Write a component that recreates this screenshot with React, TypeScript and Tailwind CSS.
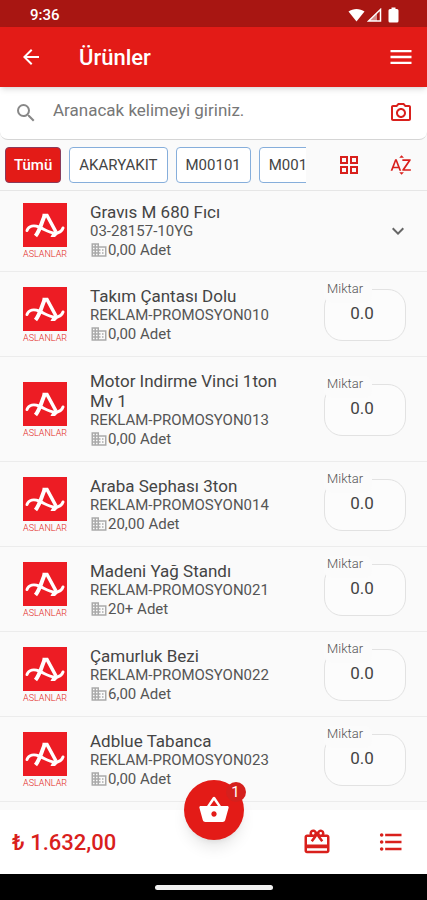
import { ReactElement } from 'react'
import {
  MdArrowBack,
  MdBusiness,
  MdCardGiftcard,
  MdExpandMore,
  MdFormatListBulleted,
  MdMenu,
  MdOutlineGridView,
  MdOutlinePhotoCamera,
  MdSearch,
  MdShoppingBasket,
  MdSortByAlpha,
} from 'react-icons/md'

interface Product {
  name: string
  code: string
  stock: string
  expandable?: boolean
}

const categories = ['AKARYAKIT', 'M00101', 'M001']

const products: Product[] = [
  { name: 'Gravıs M 680 Fıcı', code: '03-28157-10YG', stock: '0,00 Adet', expandable: true },
  { name: 'Takım Çantası Dolu', code: 'REKLAM-PROMOSYON010', stock: '0,00 Adet' },
  { name: 'Motor Indirme Vinci 1ton Mv 1', code: 'REKLAM-PROMOSYON013', stock: '0,00 Adet' },
  { name: 'Araba Sephası 3ton', code: 'REKLAM-PROMOSYON014', stock: '20,00 Adet' },
  { name: 'Madeni Yağ Standı', code: 'REKLAM-PROMOSYON021', stock: '20+ Adet' },
  { name: 'Çamurluk Bezi', code: 'REKLAM-PROMOSYON022', stock: '6,00 Adet' },
  { name: 'Adblue Tabanca', code: 'REKLAM-PROMOSYON023', stock: '0,00 Adet' },
]

function StatusBar(): ReactElement {
  return (
    <div className="flex h-[27px] items-center justify-between bg-[#a81612] pt-0.5 pr-7 pl-[30px] text-white">
      <span className="text-[15px] leading-5 font-medium">9:36</span>
      <div className="flex items-center gap-0.5">
        <svg width="17" height="14" viewBox="0 0 17 14" fill="currentColor">
          <path d="M8.5 13.5L.5 3.5C5 0 12 0 16.5 3.5Z" />
        </svg>
        <svg width="15" height="14" viewBox="0 0 15 14" fill="none" stroke="currentColor">
          <path d="M13.5 1.5V13H1.5Z" strokeWidth="1.5" />
          <path d="M10 5V13H2Z" fill="currentColor" fillOpacity="0.5" stroke="none" />
        </svg>
        <svg className="ml-1" width="11" height="16" viewBox="0 0 11 16" fill="currentColor">
          <path d="M3.5 .5h4V2H9a1.5 1.5 0 0 1 1.5 1.5V14A1.5 1.5 0 0 1 9 15.5H2A1.5 1.5 0 0 1 .5 14V3.5A1.5 1.5 0 0 1 2 2h1.5z" />
        </svg>
      </div>
    </div>
  )
}

function BrandLogo(): ReactElement {
  return (
    <div className="flex w-11 shrink-0 flex-col items-center">
      <svg className="size-11 bg-[#ed1c24]" viewBox="0 0 44 44" fill="none" stroke="#fff">
        <path d="M4 27.5C6 22.5 11 22 16 24C22 26.500 26 30 32 30C36.500 30 39 28 40 25" strokeWidth="3" strokeLinecap="round" />
        <path d="M12.5 33C17 27.5 18 21 21.5 13" strokeWidth="4" />
        <path d="M19.5 12.500H24L33 29" strokeWidth="3.5" />
        <path d="M27.500 34H32L37 29H30Z" fill="#fff" strokeWidth="0" />
      </svg>
      <span className="mt-[3px] text-[9px] leading-[9px] font-light text-[#e31e24]">ASLANLAR</span>
    </div>
  )
}

function QuantityField({ id }: { id: string }): ReactElement {
  return (
    <div className="relative w-[82px] shrink-0">
      <input
        id={id}
        type="text"
        inputMode="decimal"
        defaultValue="0.0"
        className="block h-[52px] w-full rounded-[18px] border border-[#e2e2e2] bg-[#fcfcfc] pr-1.5 pb-1 text-center text-[17px] text-[#444]"
      />
      <label
        htmlFor={id}
        className="absolute -top-2 left-0 h-[22px] w-12 rounded-lg bg-[#fbfbfb] pl-[3px] text-[13px] leading-4 font-light text-[#555]"
      >
        Miktar
      </label>
    </div>
  )
}

function ProductRow({ product }: { product: Product }): ReactElement {
  const { name, code, stock, expandable } = product
  return (
    <li
      className={`flex items-center border-b border-[#ececec] pr-[21px] pl-[23px] ${expandable ? 'pt-[11px] pb-3' : 'pt-[14px] pb-[13px]'}`}
    >
      <BrandLogo />
      <div className="ml-[23px] min-w-0 flex-1 pr-6">
        <h2 className="text-[17px] leading-5 text-[#444]">{name}</h2>
        <p className="text-[15px] leading-[19px] text-[#555]">{code}</p>
        <p className="flex items-center text-[15px] leading-[18px] text-[#555]">
          <MdBusiness className="size-[18px] text-[#aaa]" />
          {stock}
        </p>
      </div>
      {expandable ? (
        <button type="button" aria-label="Genişlet" className="-mr-1 text-[#666]">
          <MdExpandMore className="size-6" />
        </button>
      ) : (
        <QuantityField id={code} />
      )}
    </li>
  )
}

export default function App(): ReactElement {
  return (
    <div className="flex min-h-screen flex-col bg-[#fafafa] font-[Roboto,sans-serif]">
      <StatusBar />
      <header className="z-10 flex h-[60px] items-center bg-[#e31b17] pr-3 pl-[19px] text-white shadow-md">
        <button type="button" aria-label="Geri">
          <MdArrowBack className="size-6" />
        </button>
        <h1 className="ml-9 flex-1 text-[22px] font-medium">Ürünler</h1>
        <button type="button" aria-label="Menü">
          <MdMenu className="size-7" />
        </button>
      </header>

      <div className="flex h-[53px] items-center rounded-b-lg border-b border-[#d5d5d5] bg-white px-3.5">
        <MdSearch className="size-6 text-[#888]" />
        <input
          type="search"
          aria-label="Ara"
          placeholder="Aranacak kelimeyi giriniz."
          className="ml-[15px] min-w-0 flex-1 pb-1 text-[17px] outline-none placeholder:text-[#777]"
        />
        <button type="button" aria-label="Kamera" className="text-[#d9201c]">
          <MdOutlinePhotoCamera className="size-6" />
        </button>
      </div>

      <div className="flex h-[51px] items-center border-b border-[#e6e6e6] pl-[5px]">
        <div className="flex min-w-0 flex-1 gap-2 overflow-hidden text-[15px]">
          <button
            type="button"
            className="h-9 shrink-0 rounded-[4px] border border-[#8a3a5a] bg-[#e31b17] px-2 font-medium text-white"
          >
            Tümü
          </button>
          {categories.map((category) => (
            <button
              key={category}
              type="button"
              className="h-9 shrink-0 rounded-[4px] border border-[#86aedb] bg-white px-[9px] text-[#444]"
            >
              {category}
            </button>
          ))}
        </div>
        <div className="flex w-[121px] shrink-0 items-center justify-between pr-3.5 pl-[31px] text-[#d9201c]">
          <button type="button" aria-label="Izgara görünümü">
            <MdOutlineGridView className="size-6" />
          </button>
          <button type="button" aria-label="Sırala">
            <MdSortByAlpha className="size-6" />
          </button>
        </div>
      </div>

      <ul className="flex-1">
        {products.map((product) => (
          <ProductRow key={product.code} product={product} />
        ))}
      </ul>

      <footer className="relative mt-2 flex h-16 items-center bg-white pr-[22px] pl-3 text-[#d9201c]">
        <p className="flex-1 text-[22px] font-medium">₺ 1.632,00</p>
        <button type="button" aria-label="Kampanyalar">
          <MdCardGiftcard className="size-[30px]" />
        </button>
        <button type="button" aria-label="Liste" className="ml-[45px]">
          <MdFormatListBulleted className="size-7" />
        </button>
        <button
          type="button"
          aria-label="Sepet"
          className="absolute -top-[30px] left-1/2 flex size-[60px] -translate-x-1/2 items-center justify-center rounded-full bg-[#e31b17] text-white shadow-lg"
        >
          <MdShoppingBasket className="size-8" />
          <span className="absolute top-0.5 -right-0.5 size-5 rounded-full bg-[#d5201d] text-[15px] leading-5">
            1
          </span>
        </button>
      </footer>
      <div className="flex h-[26px] items-center justify-center bg-black">
        <div className="h-[5px] w-[118px] rounded-full bg-[#f0f0f0]" />
      </div>
    </div>
  )
}
